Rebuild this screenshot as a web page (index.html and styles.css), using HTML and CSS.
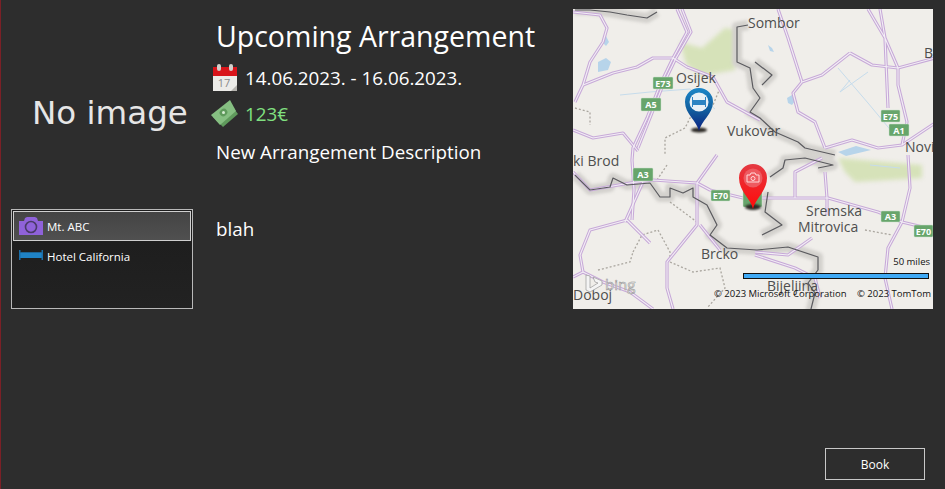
FILE: index.html
```html
<!DOCTYPE html>
<html lang="en">
<head>
  <meta charset="UTF-8">
  <meta name="viewport" content="width=device-width, initial-scale=1.0">
  <title>Upcoming Arrangement</title>
  <link rel="stylesheet" href="styles.css">
</head>
<body>
  <div class="page">
    <div class="content">
      <div class="side">
        <div class="no-image">No image</div>
        <ul class="places">
          <li class="place selected">
            <svg class="place-icon" viewBox="0 0 24 18">
              <path fill="#8f62d9" d="M0 4h5l1-3 2-1h8l2 1 1 3h5v14H0z"/>
              <circle cx="12" cy="10" r="5.500" fill="none" stroke="#4a3a68" stroke-width="1.600"/>
            </svg>
            <span>Mt. ABC</span>
          </li>
          <li class="place">
            <svg class="place-icon" viewBox="0 0 24 18">
              <path fill="#1b6ea8" d="M0 3h1.500v2.500h21V3H24v10h-1.500v-2h-21v2H0z"/>
              <path fill="#1f83c6" d="M1.500 5.500h21V11h-21z"/>
            </svg>
            <span>Hotel California</span>
          </li>
        </ul>
      </div>

      <div class="details">
        <h1 class="title">Upcoming Arrangement</h1>
        <div class="info-row">
          <svg class="info-icon" viewBox="0 0 26 28">
            <rect x="1" y="3" width="24" height="24" fill="#ecebe8"/>
            <rect x="1" y="3" width="24" height="9" fill="#d8141a"/>
            <rect x="5" y="0" width="4" height="7" rx="2" fill="#d4d0cc"/>
            <rect x="17" y="0" width="4" height="7" rx="2" fill="#d4d0cc"/>
            <text class="cal-day" x="12" y="23">17</text>
            <path fill="#b5b3ae" d="M19 27l6-6v6z"/>
          </svg>
          <span>14.06.2023. - 16.06.2023.</span>
        </div>
        <div class="info-row price">
          <svg class="info-icon" viewBox="0 0 28 28">
            <path fill="#5f9a5c" d="M2 17L21 6l6 8-15 13z"/>
            <path fill="#86bf82" d="M0 15L19 0l6 11-16 14z"/>
            <ellipse cx="12.500" cy="12.500" rx="4" ry="3.500" fill="#5f9a5c" transform="rotate(-40 12.500 12.500)"/>
            <circle cx="12.500" cy="12.500" r="1.500" fill="#d8ecd4"/>
          </svg>
          <span>123€</span>
        </div>
        <p class="description">New Arrangement Description</p>
        <p class="note">blah</p>
      </div>

      <svg class="map" viewBox="573 9 360 300">
        <defs>
          <linearGradient id="blue-pin" x1="0" y1="0" x2="0" y2="1">
            <stop offset="0" stop-color="#1c86c8"/>
            <stop offset="0.500" stop-color="#12609f"/>
            <stop offset="1" stop-color="#0a1f80"/>
          </linearGradient>
          <linearGradient id="red-pin" x1="0" y1="0" x2="0" y2="1">
            <stop offset="0" stop-color="#e43a42"/>
            <stop offset="1" stop-color="#ff0a0a"/>
          </linearGradient>
          <g id="roads">
            <path d="M573 12l27 3 7 13-4 14-13 20-7 23-8 17"/>
            <path d="M583 85l30-12 24-6 16-9h20l14 9 26 10 14 25 20 11 13 7"/>
            <path d="M677 9l10 23-14 26-13 27-13 33-14 30-1 12 2 30-2 30"/>
            <path d="M682 9l9 23-15 26-13 27-13 33-12 30"/>
            <path d="M573 172l17 18 40-7 23-3 44 3 13 7 33 8h85l50 14 24 10 33 8"/>
            <path d="M697 183l20-28M697 183v42l-30 37v26l6 21"/>
            <path d="M627 220l23 23M627 220l-37 10-10 25 3 17-10 5"/>
            <path d="M583 272l20 10 27 10 23 17"/>
            <path d="M822 158l-27 14v26M825 172l2 26v17"/>
            <path d="M908 155l2 33-8 34-14 26-3 30 7 31"/>
            <path d="M755 252l33 3 24-17M755 255l40 13 20 10 5 20"/>
            <path d="M880 9l5 29 3 70M868 9l17 29 13 30v17l9 37-5 23"/>
            <path d="M850 53l22 12 26 3 37-10"/>
            <path d="M850 53l-28 22-20 7-9 11 5 19 17 10 10 26"/>
            <path d="M778 9l10 29 14 44"/>
            <path d="M825 148l27-8 26 8 24-3 33-22"/>
            <path d="M573 130l20 8 30-5 15 18M643 182l-18 40M700 225l20 25"/>
          </g>
          <g id="border">
            <path d="M575 10h15l20 2 17 3 20 3 10-6"/>
            <path d="M748 25l-11 2v35l13 6 3 20 7 10-10 14 10 6 15 14 23 10 7 6 30 7"/>
            <path d="M755 62l17 13-10 10"/>
            <path d="M575 175l15 15 20-3 3-9 14 7 23-2 10 14h10v-9l13 5 10-5v9l14 8 10 20-7 10 17 13 30 2 31-3 30 10v13l-10 13 7 10-5 20"/>
            <path d="M770 177l13-9 2-8 20-2 28 7-15 3M768 192l-3 20 17 13-20 10"/>
          </g>
        </defs>
        <rect class="map-land" x="573" y="9" width="360" height="300"/>
        <path class="map-park" d="M680 42l22 6 23-20 12 2-2 40-35 6-14-12z"/>
        <path class="map-park" d="M838 158l84 7v13l-67 4-10-10z"/>
        <path class="map-water" d="M598 62l8-4 5 4-3 8-10 2zM602 42l4-6 3 6-3 4zM768 45l4 3 2 4-4-1zM787 98l5-3 3 6-3 4-4-2zM838 152l18-6 15 4-25 6z"/>
        <path class="map-river" d="M620 95l30-3 40-3 25 20M838 68l30 35 25 30M870 165l30 3M850 80l-10 12 28-20"/>
        <use class="map-halo" href="#border"/>
        <path class="map-dots" d="M720 88l-7 17-23 13-5 10-20 10v17M575 108l15 4v13M667 165l-10 15M633 252l9-17 16-5 12 22v6M598 270l32-8 3-10M670 202l27 20M670 262l23 10 27-4 5 20-18 20M865 230l27 5"/>
        <use class="road-case" href="#roads"/>
        <use class="road-fill" href="#roads"/>
        <use class="map-border" href="#border"/>

        <text class="map-label" x="748" y="28">Sombor</text>
        <text class="map-label" x="676" y="83">Osijek</text>
        <text class="map-label" x="727" y="136">Vukovar</text>
        <text class="map-label" x="905" y="152">Novi</text>
        <text class="map-label" x="924" y="58">B</text>
        <text class="map-label" x="573" y="166">ki Brod</text>
        <text class="map-label" x="701" y="259">Brcko</text>
        <text class="map-label" x="806" y="216">Sremska</text>
        <text class="map-label" x="798" y="232">Mitrovica</text>
        <text class="map-label" x="767" y="291">Bijeljina</text>
        <text class="map-label" x="573" y="300">Doboj</text>

        <g class="shield">
          <rect x="653" y="77" width="20" height="12" rx="1"/><text x="663" y="86.500">E73</text>
          <rect x="641" y="98" width="20" height="13" rx="1"/><text x="651" y="108">A5</text>
          <rect x="881" y="110" width="19" height="12" rx="1"/><text x="890.500" y="119.500">E75</text>
          <rect x="889" y="124" width="20" height="12" rx="1"/><text x="899" y="133.500">A1</text>
          <rect x="633" y="168" width="20" height="13" rx="1"/><text x="643" y="178">A3</text>
          <rect x="711" y="190" width="19" height="11" rx="1"/><text x="720.500" y="199">E70</text>
          <rect x="881" y="211" width="19" height="11" rx="1"/><text x="890.500" y="220">A3</text>
          <rect x="914" y="225" width="19" height="12" rx="1"/><text x="923.500" y="234.500">E70</text>
          <rect x="743" y="190" width="19" height="17" rx="1"/>
        </g>

        <ellipse class="pin-shadow" cx="699" cy="130" rx="8" ry="2.500"/>
        <path class="pin-blue" d="M699 131c-2-10-14-17-14-29a14 14 0 0 1 28 0c0 12-12 19-14 29z"/>
        <circle class="pin-face" cx="699" cy="102" r="9.500"/>
        <path class="pin-blue-icon" d="M692 97h1v3h12v-3h1v10h-1v-2h-12v2h-1z"/>

        <ellipse class="pin-shadow" cx="753" cy="207" rx="8" ry="3"/>
        <path class="pin-red" d="M753 209c-2-10-14-18-14-31a14 14 0 0 1 28 0c0 13-12 21-14 31z"/>
        <circle class="pin-red-face" cx="753" cy="178" r="9.500"/>
        <path class="pin-red-icon" d="M747 175h3l1-2h4l1 2h3v7h-12z"/>
        <circle class="pin-red-icon" cx="753" cy="178.500" r="2"/>

        <text class="map-small end" x="930" y="265">50 miles</text>
        <rect class="scale-bar" x="743.500" y="273.500" width="185" height="5"/>
        <path class="bing-mark" d="M586 275l4 1v12l8-5-3-1-2-5 9 4v4l-12 7-4-2z"/>
        <text class="bing" x="605" y="290">bing</text>
        <text class="map-small" x="714" y="297">© 2023 Microsoft Corporation</text>
        <text class="map-small" x="857" y="297">© 2023 TomTom</text>
      </svg>
    </div>

    <div class="actions">
      <button class="book">Book</button>
    </div>
  </div>
</body>
</html>
```

FILE: styles.css
```css
* {
  box-sizing: border-box;
}
body {
  margin: 0;
  background: #2d2d2d;
  color: white;
  font-family: "Open Sans", "Noto Sans", sans-serif;
}
.page {
  height: 100vh;
  border-left: 1px solid #7b2026;
  padding: 9px 20px 9px 10px;
  display: flex;
  flex-direction: column;
  justify-content: space-between;
}
.content {
  display: flex;
}
.side {
  width: 182px;
  flex-shrink: 0;
}
.no-image {
  height: 200px;
  padding: 80px 0 0 21px;
  font-family: "DejaVu Sans", sans-serif;
  font-size: 32.500px;
  line-height: 48px;
  white-space: nowrap;
  color: #e6e6e6;
}
.places {
  list-style: none;
  margin: 0;
  padding: 1px;
  height: 100px;
  border: 1px solid #b9b9b9;
  background: linear-gradient(#1c1c1c, #222);
}
.place {
  height: 30px;
  padding-left: 5px;
  border: 1px solid transparent;
  display: flex;
  align-items: center;
  gap: 4px;
  font-size: 11.500px;
}
.place.selected {
  background: linear-gradient(#444, #505050);
  border-color: #cfcfcf;
}
.place-icon {
  width: 24px;
  height: 18px;
}
.details {
  width: 380px;
  flex-shrink: 0;
  padding-left: 23px;
}
.title {
  margin: 8px 0 8px;
  font-size: 28.500px;
  font-weight: 400;
  line-height: 38px;
  white-space: nowrap;
}
.info-row {
  margin: 7px 0 0 -5px;
  height: 29px;
  display: flex;
  align-items: center;
  gap: 6px;
  font-size: 18.800px;
  white-space: nowrap;
}
.price {
  color: #80e080;
}
.info-icon {
  width: 28px;
  height: 28px;
}
.cal-day {
  font-size: 11px;
  fill: #8a8a8a;
  text-anchor: middle;
}
.description {
  margin: 11px 0 0;
  font-size: 18.800px;
  line-height: 26px;
}
.note {
  margin: 51px 0 0;
  font-size: 18.800px;
  line-height: 26px;
}
.map {
  width: 360px;
  height: 300px;
  flex-shrink: 0;
  display: block;
}
.map-land {
  fill: #f0eeea;
}
.map-park {
  fill: #d6e2b9;
  filter: blur(2px);
}
.map-water {
  fill: #b7d4ea;
}
.map-river {
  fill: none;
  stroke: #c6dcec;
  stroke-width: 1;
}
.map-halo {
  fill: none;
  stroke: #d3d1cd;
  stroke-width: 10;
  stroke-linejoin: round;
  filter: blur(1.500px);
}
.map-border {
  fill: none;
  stroke: #5a5a5e;
  stroke-width: 1.200;
  stroke-linejoin: round;
}
.map-dots {
  fill: none;
  stroke: #aaa69f;
  stroke-width: 1.300;
  stroke-dasharray: 2 2;
}
.road-case {
  fill: none;
  stroke: #c7a9d8;
  stroke-width: 3.200;
  stroke-linejoin: round;
}
.road-fill {
  fill: none;
  stroke: #f3eff5;
  stroke-width: 1.100;
  stroke-linejoin: round;
}
.map-label {
  font-size: 14px;
  fill: #4e4e4e;
}
.shield rect {
  fill: #67a56b;
  stroke: #cfe2cf;
  stroke-width: 0.500;
}
.shield text {
  font-size: 9px;
  font-weight: 700;
  fill: white;
  text-anchor: middle;
}
.pin-shadow {
  fill: #2d2a26;
  filter: blur(0.800px);
}
.pin-blue {
  fill: url(#blue-pin);
}
.pin-face {
  fill: #e9f0f6;
}
.pin-blue-icon {
  fill: #2d83c2;
}
.pin-red {
  fill: url(#red-pin);
}
.pin-red-face {
  fill: #ee5a60;
}
.pin-red-icon {
  fill: none;
  stroke: #ffd9da;
  stroke-width: 1;
}
.map-small {
  font-size: 9.500px;
  fill: #111;
}
.end {
  text-anchor: end;
}
.scale-bar {
  fill: #3fa9f5;
  stroke: #111;
  stroke-width: 1;
}
.bing-mark {
  fill: #f4f4f4;
  stroke: #8a8a8a;
  stroke-width: 0.600;
}
.bing {
  font-size: 15px;
  fill: #ececec;
  stroke: #8f8f8f;
  stroke-width: 0.500;
}
.actions {
  display: flex;
  justify-content: flex-end;
}
.book {
  width: 100px;
  height: 32px;
  background: transparent;
  border: 1px solid #c8c8c8;
  color: white;
  font-family: inherit;
  font-size: 12px;
}
```
